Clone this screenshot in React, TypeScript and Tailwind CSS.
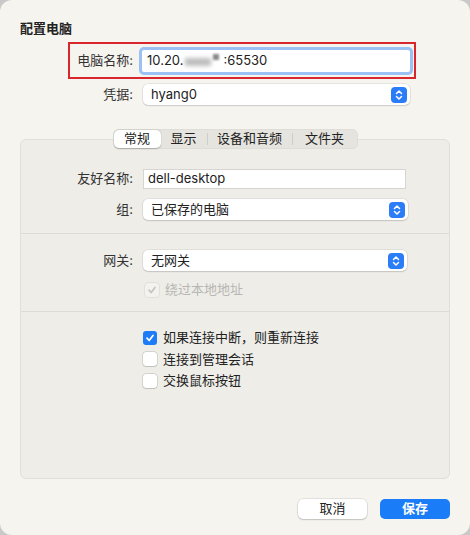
import React from "react";

const font = { fontFamily: '"Inter", "Noto Sans CJK SC", "Noto Sans", sans-serif' };

function Stepper() {
  return (
    <div className="w-[16px] h-[16px] rounded-[4px] bg-[#2a7df6] flex items-center justify-center">
      <svg width="10" height="12" viewBox="0 0 10 12" fill="none">
        <path d="M2.5 4.5 L5 2 L7.5 4.5" stroke="white" strokeWidth="1.5" strokeLinecap="round" strokeLinejoin="round" />
        <path d="M2.5 7.5 L5 10 L7.5 7.5" stroke="white" strokeWidth="1.5" strokeLinecap="round" strokeLinejoin="round" />
      </svg>
    </div>
  );
}

function Select({ value, w }: { value: string; w: string }) {
  return (
    <div
      className={`${w} h-[21px] bg-white rounded-[5px] flex items-center justify-between pl-[8px] pr-[3px] text-[13px] text-[#222] shadow-[0_0_0_0.5px_rgba(0,0,0,0.12),0_1px_1.5px_rgba(0,0,0,0.12)]`}
    >
      <span className="leading-none">{value}</span>
      <Stepper />
    </div>
  );
}

function Checkbox({ checked, disabled, label }: { checked?: boolean; disabled?: boolean; label: string }) {
  return (
    <div className="flex items-center h-[21px]">
      {checked ? (
        <div className="w-[14px] h-[14px] rounded-[3px] bg-[#1e7cf6] flex items-center justify-center">
          <svg width="10" height="10" viewBox="0 0 10 10" fill="none">
            <path d="M2 5.2 L4.2 7.5 L8 2.5" stroke="white" strokeWidth="1.7" strokeLinecap="round" strokeLinejoin="round" />
          </svg>
        </div>
      ) : disabled ? (
        <div className="w-[14px] h-[14px] rounded-[3px] bg-[#f3f2ee] shadow-[0_0_0_0.5px_rgba(0,0,0,0.1)] flex items-center justify-center">
          <svg width="10" height="10" viewBox="0 0 10 10" fill="none">
            <path d="M2 5.2 L4.2 7.5 L8 2.5" stroke="#c4c3bf" strokeWidth="1.7" strokeLinecap="round" strokeLinejoin="round" />
          </svg>
        </div>
      ) : (
        <div className="w-[14px] h-[14px] rounded-[3px] bg-white shadow-[0_0_0_0.5px_rgba(0,0,0,0.2),0_0.5px_1px_rgba(0,0,0,0.1)]" />
      )}
      <span className={`ml-[6px] text-[13px] leading-none ${disabled ? "text-[#b8b7b3]" : "text-[#222]"}`}>{label}</span>
    </div>
  );
}

export default function App() {
  return (
    <div className="w-[470px] h-[535px] bg-[#c9c9c9]" style={font}>
      <div className="w-[470px] h-[535px] bg-[#f6f4ef] rounded-[12px] flex flex-col">
        <div className="pt-[20px] pl-[20px] text-[13px] font-bold leading-[16px] text-[#222]">配置电脑</div>

        <div className="mt-[6px] ml-[68px] w-[348px] h-[37px] border-2 border-[#d8262c] flex items-center">
          <div className="w-[63px] text-right text-[13px] text-[#333]">电脑名称:</div>
          <div className="ml-[9px] w-[268px] h-[22px] bg-white rounded-[2px] shadow-[0_0_0_3px_rgba(80,150,245,0.55)] flex items-center pl-[5px] text-[13px] text-[#222]">
            <span>10.20.</span>
            <span className="relative w-[40px] h-[14px]">
              <span className="absolute left-[2px] top-[4px] w-[26px] h-[8px] bg-[#bdbdbd] blur-[2px]" />
              <span className="absolute left-[30px] top-[0px] w-[6px] h-[6px] bg-[#8a8a8a] blur-[1px]" />
            </span>
            <span>:65530</span>
          </div>
        </div>

        <div className="mt-[5px] flex items-center">
          <div className="w-[133px] text-right text-[13px] text-[#333]">凭据:</div>
          <div className="ml-[10px]">
            <Select value="hyang0" w="w-[267px]" />
          </div>
        </div>

        <div className="mt-[24px] flex justify-center relative z-10">
          <div className="flex items-center h-[20px] bg-[#e6e4df] rounded-[6px] p-[1px] shadow-[inset_0_0_0_0.5px_rgba(0,0,0,0.06)] text-[13px] text-[#222]">
            <div className="w-[47px] h-[18px] bg-white rounded-[5px] shadow-[0_0.5px_1.5px_rgba(0,0,0,0.25)] flex items-center justify-center">常规</div>
            <div className="w-[46px] flex items-center justify-center">显示</div>
            <div className="w-px h-[12px] bg-[#cfcdc8]" />
            <div className="w-[84px] flex items-center justify-center">设备和音频</div>
            <div className="w-px h-[12px] bg-[#cfcdc8]" />
            <div className="w-[64px] flex items-center justify-center">文件夹</div>
          </div>
        </div>

        <div className="-mt-[10px] ml-[20px] w-[430px] h-[340px] bg-[#eeede8] border border-[#e0dfda] rounded-[6px] flex flex-col">
          <div className="mt-[29px] flex items-center">
            <div className="w-[112px] text-right text-[13px] text-[#333]">友好名称:</div>
            <div className="ml-[10px] w-[263px] h-[20px] bg-white border border-[#d6d5d1] flex items-center pl-[4px] text-[13px] text-[#222]">
              dell-desktop
            </div>
          </div>
          <div className="mt-[10px] flex items-center">
            <div className="w-[112px] text-right text-[13px] text-[#333]">组:</div>
            <div className="ml-[10px]">
              <Select value="已保存的电脑" w="w-[265px]" />
            </div>
          </div>
          <div className="mt-[13px] h-px bg-[#dcdbd6]" />
          <div className="mt-[16px] flex items-center">
            <div className="w-[112px] text-right text-[13px] text-[#333]">网关:</div>
            <div className="ml-[10px]">
              <Select value="无网关" w="w-[264px]" />
            </div>
          </div>
          <div className="mt-[8px] ml-[124px]">
            <Checkbox disabled checked={false} label="绕过本地地址" />
          </div>
          <div className="mt-[11px] h-px bg-[#dcdbd6]" />
          <div className="mt-[15px] ml-[122px] flex flex-col gap-[0.5px]">
            <Checkbox checked label="如果连接中断，则重新连接" />
            <Checkbox label="连接到管理会话" />
            <Checkbox label="交换鼠标按钮" />
          </div>
        </div>

        <div className="mt-[20px] flex justify-end pr-[20px] gap-[13px]">
          <div className="w-[69px] h-[20px] bg-white rounded-[5px] shadow-[0_0_0_0.5px_rgba(0,0,0,0.15),0_1px_1.5px_rgba(0,0,0,0.15)] flex items-center justify-center text-[13px] text-[#222]">
            取消
          </div>
          <div className="w-[70px] h-[20px] bg-[#1a7cf7] rounded-[5px] flex items-center justify-center text-[13px] font-semibold text-white">
            保存
          </div>
        </div>
      </div>
    </div>
  );
}
